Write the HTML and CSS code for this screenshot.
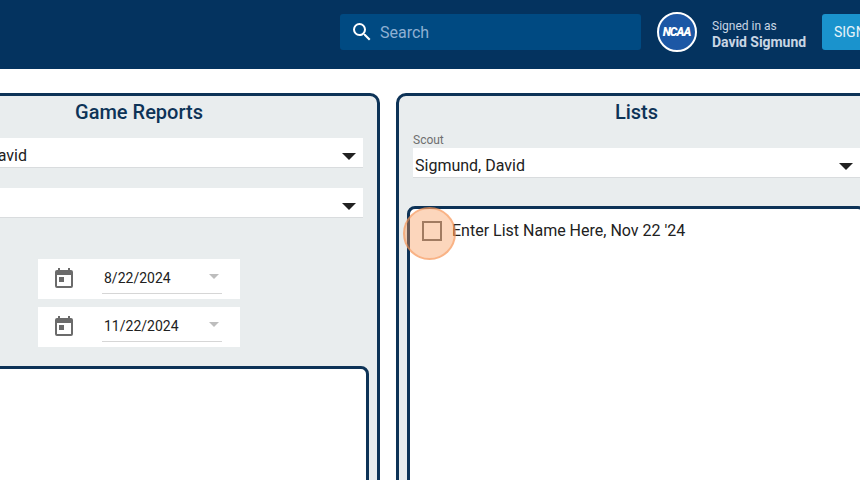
FILE: index.html
```html
<!DOCTYPE html>
<html>
<head>
<meta charset="utf-8" />
<title>Scouting</title>
<link rel="stylesheet" href="styles.css">
</head>
<body>
<div class="header">
	<div class="search">
		<svg class="search-icon" viewBox="0 0 24 24"><path d="M15.5 14h-.79l-.28-.27A6.47 6.47 0 0 0 16 9.5 6.5 6.5 0 1 0 9.5 16c1.61 0 3.09-.59 4.23-1.57l.27.28v.79l5 4.99L20.49 19l-4.99-5zm-6 0C7.01 14 5 11.99 5 9.5S7.01 5 9.5 5 14 7.01 14 9.5 11.99 14 9.5 14z"/></svg>
		<span class="search-text">Search</span>
	</div>
	<div class="logo"><span>NCAA</span></div>
	<div class="user">
		<div class="user-small">Signed in as</div>
		<div class="user-name">David Sigmund</div>
	</div>
	<div class="signout">SIGN OUT</div>
</div>
<div class="main">
	<div class="panel panel-left">
		<h2 class="panel-title">Game Reports</h2>
		<div class="select select-first"><span>Sigmund, David</span><i class="arrow"></i></div>
		<div class="select select-second"><span></span><i class="arrow"></i></div>
		<div class="dates">
			<div class="date">
				<svg class="cal" viewBox="0 0 24 24"><path d="M19 4h-1V2h-2v2H8V2H6v2H5a2 2 0 0 0-2 2v14a2 2 0 0 0 2 2h14a2 2 0 0 0 2-2V6a2 2 0 0 0-2-2zm0 16H5V9h14v11zM7 11h5v5H7z"/></svg>
				<div class="date-input"><span>8/22/2024</span><i class="arrow-light"></i></div>
			</div>
			<div class="date">
				<svg class="cal" viewBox="0 0 24 24"><path d="M19 4h-1V2h-2v2H8V2H6v2H5a2 2 0 0 0-2 2v14a2 2 0 0 0 2 2h14a2 2 0 0 0 2-2V6a2 2 0 0 0-2-2zm0 16H5V9h14v11zM7 11h5v5H7z"/></svg>
				<div class="date-input"><span>11/22/2024</span><i class="arrow-light"></i></div>
			</div>
		</div>
		<div class="box box-left"></div>
	</div>
	<div class="panel panel-right">
		<h2 class="panel-title">Lists</h2>
		<div class="field-label">Scout</div>
		<div class="select"><span>Sigmund, David</span><i class="arrow"></i></div>
		<div class="box box-right">
			<div class="list-row">
				<span class="check"></span>
				<span class="list-name">Enter List Name Here, Nov 22 '24</span>
				<span class="spot"></span>
			</div>
		</div>
	</div>
</div>
</body>
</html>
```
FILE: styles.css
```css
*{ margin:0; padding:0; box-sizing:border-box;}
html,body{ width:860px; height:480px; overflow:hidden; background:#fff;}
body{ font-family:Roboto,"Liberation Sans",sans-serif; color:#212121;}

.header{ height:69px; background:#04335f; display:flex; align-items:flex-start; padding:14px 0 0 340px; white-space:nowrap; width:960px;}
.search{ width:301px; height:36px; background:#004a82; border-radius:3px; display:flex; align-items:center; padding-left:10px;}
.search-icon{ width:24px; height:24px; fill:#fff; flex:none;}
.search-text{ font-size:16px; color:#8fb0d3; margin-left:6px;}
.logo{ width:40px; height:40px; margin:-2px 0 0 16px; border-radius:50%; border:2px solid #fff; background:#1c57a5; display:flex; align-items:center; justify-content:center; overflow:hidden;}
.logo span{ font-size:12px; font-weight:900; font-style:italic; color:#fff; letter-spacing:-1px; margin-left:-1px;}
.user{ margin-left:15px; width:110px; padding-top:5px;}
.user-small{ font-size:12px; line-height:15px; color:#c9d6e4;}
.user-name{ font-size:14px; line-height:17px; font-weight:700; color:#c9d6e4; letter-spacing:-.05px;}
.signout{ width:100px; height:36px; background:#1a93cd; border-radius:3px; color:#e6f3fa; font-size:14px; line-height:36px; padding-left:12px;}

.main{ display:flex; gap:16px; margin-left:-102px; margin-top:24px;}
.panel{ flex:none; height:420px; border:3px solid #0d3357; border-radius:10px; background:#e9edee; padding:0 14px;}
.panel-left{ width:482px;}
.panel-right{ width:481px;}
.panel-title{ font-size:20px; line-height:24px; font-weight:500; color:#0d3357; text-align:center; margin-top:4px;}

.select{ height:30px; background:#fff; border-bottom:1px solid #d9dcde; display:flex; align-items:center; justify-content:space-between; padding:6px 7px 0 2px; font-size:16px;}
.select-first{ margin-top:14px;}
.select-second{ margin-top:20px;}
.arrow{ width:0; height:0; border-left:7px solid transparent; border-right:7px solid transparent; border-top:7px solid #212121; margin-top:2px;}
.field-label{ font-size:12px; line-height:14px; color:#6f6f6f; margin-top:9px; height:15px;}

.dates{ margin:41px 0 0 123px;}
.date{ width:202px; height:40px; background:#fff; margin-bottom:8px; display:flex; padding-left:14px;}
.cal{ width:24px; height:24px; margin-top:7px; fill:#6b6b6b; flex:none;}
.date-input{ width:120px; height:35px; margin-left:26px; border-bottom:1px solid #d6d6d6; display:flex; justify-content:space-between; font-size:14px; line-height:38px; padding:0 3px 0 2px;}
.arrow-light{ width:0; height:0; border-left:5px solid transparent; border-right:5px solid transparent; border-top:5px solid #bdbdbd; margin:15px 0 0;}

.box{ background:#fff; border:3px solid #0d3357; border-radius:8px; height:300px;}
.box-left{ margin:19px -6px 0 0;}
.box-right{ margin:28px -6px 0 -6px; padding:10px 0 0 12px;}
.list-row{ position:relative; display:flex; align-items:center; height:24px; font-size:16px;}
.check{ width:20px; height:20px; border:2px solid #6d6d6d; flex:none; display:block;}
.list-name{ margin:-2px 0 0 10px; white-space:nowrap;}
.spot{ position:absolute; width:53px; height:53px; left:-19px; top:-12px; border-radius:50%; background:rgba(247,146,78,.38); border:2px solid rgba(245,150,90,.55);}
```
